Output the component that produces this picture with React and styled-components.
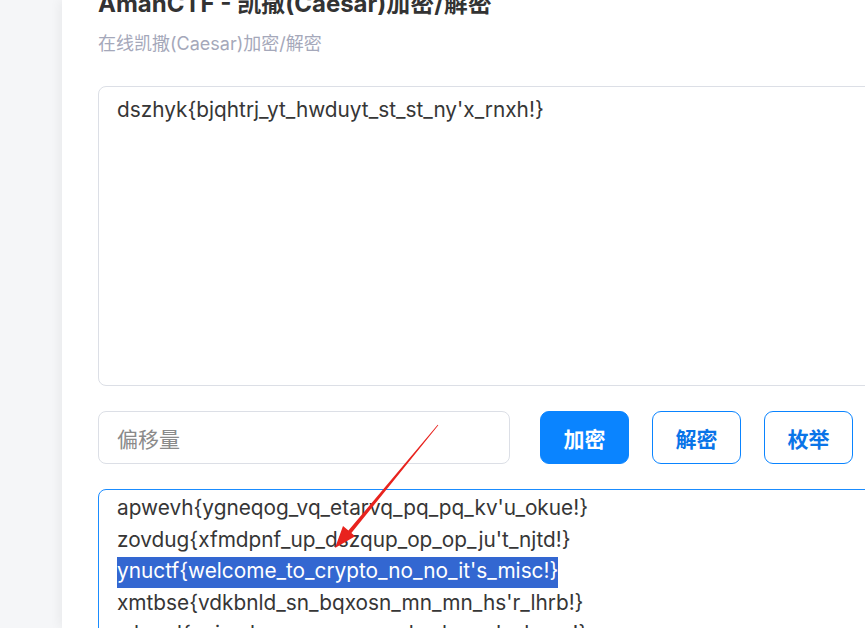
import React from "react";
import styled, { createGlobalStyle } from "styled-components";

const GlobalStyle = createGlobalStyle`
    html, body {
        margin: 0;
        padding: 0;
        overflow: hidden;
        background: #f5f6f8;
    }
    body {
        font-family: Inter, "Noto Sans CJK SC", sans-serif;
    }
`;

const Layout = styled.div`
    display: flex;
    height: 628px;
    width: 865px;
    overflow: hidden;
`;

const Sidebar = styled.div`
    width: 62px;
    flex-shrink: 0;
    background: #f5f6f8;
`;

const Main = styled.div`
    position: relative;
    flex: 1;
    background: #ffffff;
    box-shadow: -3px 0 10px rgba(0, 0, 0, 0.05);
    padding-left: 36px;
    overflow: hidden;
`;

const Content = styled.div`
    width: 820px;
`;

const Title = styled.h1`
    margin: -13px 0 0;
    font-size: 24px;
    line-height: 34px;
    font-weight: 700;
    color: #333333;
    white-space: nowrap;
`;

const Subtitle = styled.p`
    margin: 10px 0 0;
    font-size: 18px;
    line-height: 26px;
    color: #a5a8ba;
`;

const TextBox = styled.div`
    margin-top: ${(p) => p.$gap}px;
    height: ${(p) => p.$height}px;
    box-sizing: border-box;
    border: 1px solid ${(p) => (p.$focused ? "#1a8cff" : "#dcdfe6")};
    border-radius: 8px;
    padding: 7px 18px;
    overflow: hidden;
    font-size: 20.8px;
    line-height: 31.5px;
    color: #363636;
`;

const Lines = styled.div`
    margin-top: ${(p) => p.$offset || 0}px;
`;

const Line = styled.div`
    white-space: nowrap;
`;

const Selected = styled.span`
    background: #3367d1;
    color: #ffffff;
    padding: 1px 0 5px;
`;

const Controls = styled.div`
    display: flex;
    align-items: center;
    margin-top: 25px;
`;

const OffsetInput = styled.div`
    width: 412px;
    height: 53px;
    box-sizing: border-box;
    border: 1px solid #dcdfe6;
    border-radius: 8px;
    padding: 0 18px;
    display: flex;
    align-items: center;
    font-size: 21px;
    color: #8a8a8a;
    margin-right: 30px;
`;

const Button = styled.button`
    width: 89px;
    height: 53px;
    box-sizing: border-box;
    border-radius: 9px;
    border: 1px solid #0a84ff;
    background: ${(p) => (p.$primary ? "#0a84ff" : "#ffffff")};
    color: ${(p) => (p.$primary ? "#ffffff" : "#0a74e8")};
    font-family: inherit;
    font-size: 21px;
    font-weight: 700;
    margin-right: 23px;
    padding: 0;
`;

const Arrow = styled.svg`
    position: absolute;
    left: 0;
    top: 0;
    pointer-events: none;
`;

const outputLines = [
    "apwevh{ygneqog_vq_etarvq_pq_pq_kv'u_okue!}",
    "zovdug{xfmdpnf_up_dszqup_op_op_ju't_njtd!}",
    "ynuctf{welcome_to_crypto_no_no_it's_misc!}",
    "xmtbse{vdkbnld_sn_bqxosn_mn_mn_hs'r_lhrb!}",
    "wlsard{ucjamkc_rm_apwnrm_lm_lm_gr'q_kgqa!}",
];

function App() {
    return (
        <>
            <GlobalStyle />
            <Layout>
                <Sidebar />
                <Main>
                    <Content>
                        <Title>AmanCTF - 凯撒(Caesar)加密/解密</Title>
                        <Subtitle>在线凯撒(Caesar)加密/解密</Subtitle>
                        <TextBox $gap={29} $height={300}>
                            <Line>dszhyk{"{"}bjqhtrj_yt_hwduyt_st_st_ny'x_rnxh!{"}"}</Line>
                        </TextBox>
                        <Controls>
                            <OffsetInput>偏移量</OffsetInput>
                            <Button $primary>加密</Button>
                            <Button>解密</Button>
                            <Button>枚举</Button>
                        </Controls>
                        <TextBox $gap={25} $height={200} $focused>
                            <Lines $offset={-5}>
                                {outputLines.map((text, i) => (
                                    <Line key={i}>
                                        {i === 2 ? <Selected>{text}</Selected> : text}
                                    </Line>
                                ))}
                            </Lines>
                        </TextBox>
                    </Content>
                    {/* red annotation arrow drawn over the output */}
                    <Arrow width="803" height="628" viewBox="62 0 803 628">
                        <polygon
                            points="437.7,424.8 438.3,425.2 351.4,533.1 355.2,536.3 335,548 343.0,526.1 348.4,530.5"
                            fill="#e8231e"
                        />
                    </Arrow>
                </Main>
            </Layout>
        </>
    );
}

export default App;
